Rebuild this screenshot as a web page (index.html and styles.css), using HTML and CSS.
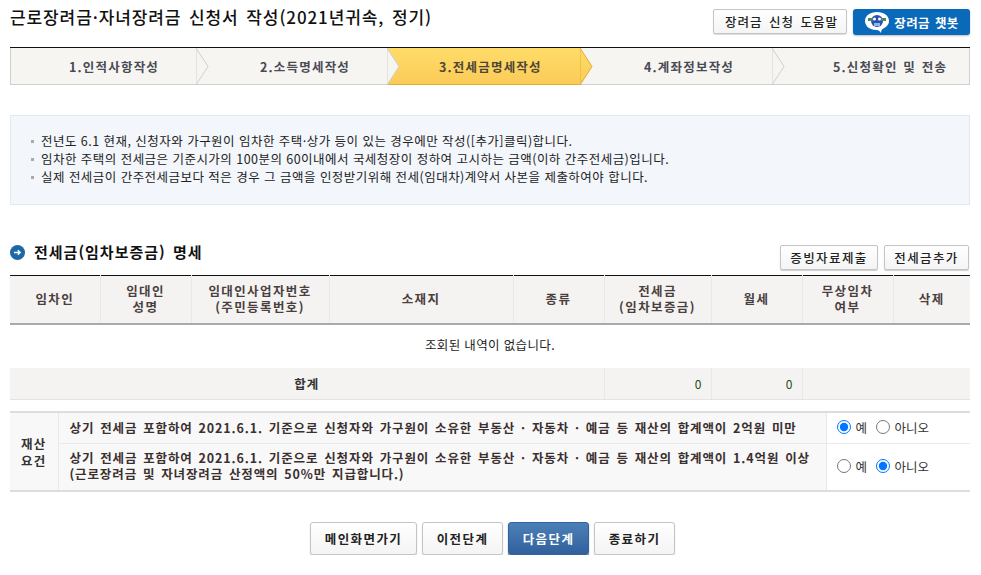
FILE: index.html
```html
<!DOCTYPE html>
<html lang="ko">
<head>
<meta charset="utf-8">
<title>근로장려금·자녀장려금 신청서 작성</title>
<link rel="stylesheet" href="styles.css">
</head>
<body>
<div class="page">
  <header class="top">
    <h1 class="title">근로장려금·자녀장려금 신청서 작성(2021년귀속, 정기)</h1>
    <div class="top-actions">
      <button class="btn btn-help">장려금 신청 도움말</button>
      <button class="btn btn-bot">
        <svg class="bot-icon" width="26" height="24" viewBox="0 0 26 24">
          <path d="M13 2C6 2 1 5.800 1 11s5 9 11 9c2 0 3 .2 5 3 0-2 .5-3.500 2-4.300 3.500-1.500 6-4.200 6-7.700C25 5.800 20 2 13 2z" fill="#fff"/>
          <circle cx="13" cy="11" r="6" fill="#2a4fb5"/>
          <rect x="4" y="8" width="5" height="3" fill="#4a8a5a"/>
          <rect x="17" y="8" width="5" height="3" fill="#4a8a5a"/>
          <circle cx="10.500" cy="9" r="1.500" fill="#fff"/>
          <circle cx="15.500" cy="9" r="1.500" fill="#fff"/>
          <path d="M10 13h6v3h-6z" fill="#8fb4e8"/>
        </svg>
        장려금 챗봇
      </button>
    </div>
  </header>

  <ol class="steps">
    <li class="step step-1"><span>1.인적사항작성</span><svg class="chev" width="13" height="37" viewBox="0 0 13 37"><path d="M0 0 12 18.500 0 37z" fill="#f6f5f2" stroke="#cfcfcf"/></svg></li>
    <li class="step step-2"><span>2.소득명세작성</span><svg class="chev" width="13" height="37" viewBox="0 0 13 37"><path d="M0 0 12 18.500 0 37z" fill="#f6f5f2" stroke="#cfcfcf"/></svg></li>
    <li class="step step-3 is-active"><span>3.전세금명세작성</span><svg class="chev" width="13" height="37" viewBox="0 0 13 37"><defs><linearGradient id="g" x1="0" y1="0" x2="0" y2="1"><stop offset="0" stop-color="#ffdc68"/><stop offset="1" stop-color="#fbcb58"/></linearGradient></defs><path d="M0 0 12 18.500 0 37z" fill="url(#g)" stroke="#e3ae2f"/></svg></li>
    <li class="step step-4"><span>4.계좌정보작성</span><svg class="chev" width="13" height="37" viewBox="0 0 13 37"><path d="M0 0 12 18.500 0 37z" fill="#f6f5f2" stroke="#cfcfcf"/></svg></li>
    <li class="step step-5"><span>5.신청확인 및 전송</span></li>
  </ol>

  <ul class="notice">
    <li>전년도 6.1 현재, 신청자와 가구원이 임차한 주택·상가 등이 있는 경우에만 작성([추가]클릭)합니다.</li>
    <li>임차한 주택의 전세금은 기준시가의 100분의 60이내에서 국세청장이 정하여 고시하는 금액(이하 간주전세금)입니다.</li>
    <li>실제 전세금이 간주전세금보다 적은 경우 그 금액을 인정받기위해 전세(임대차)계약서 사본을 제출하여야 합니다.</li>
  </ul>

  <div class="section-head">
    <h2 class="section-title">
      <svg class="section-icon" width="15" height="15" viewBox="0 0 15 15">
        <circle cx="7.500" cy="7.500" r="7.500" fill="#1f68a8"/>
        <path d="M4 7.500h6M7.800 5.200l2.400 2.300-2.400 2.300" fill="none" stroke="#fff" stroke-width="1.300"/>
      </svg>
      전세금(임차보증금) 명세
    </h2>
    <div class="section-actions">
      <button class="btn btn-small">증빙자료제출</button>
      <button class="btn btn-small">전세금추가</button>
    </div>
  </div>

  <table class="data">
    <colgroup>
      <col class="c1"><col class="c2"><col class="c3"><col class="c4"><col class="c5"><col class="c6"><col class="c7"><col class="c8"><col class="c9">
    </colgroup>
    <thead>
      <tr>
        <th>임차인</th>
        <th>임대인<br>성명</th>
        <th>임대인사업자번호<br>(주민등록번호)</th>
        <th>소재지</th>
        <th>종류</th>
        <th>전세금<br>(임차보증금)</th>
        <th>월세</th>
        <th>무상임차<br>여부</th>
        <th>삭제</th>
      </tr>
    </thead>
    <tbody>
      <tr class="empty"><td colspan="9">조회된 내역이 없습니다.</td></tr>
    </tbody>
    <tfoot>
      <tr>
        <th colspan="5">합계</th>
        <td class="num">0</td>
        <td class="num">0</td>
        <td colspan="2"></td>
      </tr>
    </tfoot>
  </table>

  <table class="assets">
    <colgroup><col class="a1"><col class="a2"><col class="a3"></colgroup>
    <tbody>
      <tr class="r1">
        <th rowspan="2">재산<br>요건</th>
        <td class="desc">상기 전세금 포함하여 2021.6.1. 기준으로 신청자와 가구원이 소유한 부동산 · 자동차 · 예금 등 재산의 합계액이 2억원 미만</td>
        <td class="choice">
          <label><input type="radio" name="a" checked>예</label>
          <label><input type="radio" name="a">아니오</label>
        </td>
      </tr>
      <tr class="r2">
        <td class="desc">상기 전세금 포함하여 2021.6.1. 기준으로 신청자와 가구원이 소유한 부동산 · 자동차 · 예금 등 재산의 합계액이 1.4억원 이상<br>(근로장려금 및 자녀장려금 산정액의 50%만 지급합니다.)</td>
        <td class="choice">
          <label><input type="radio" name="b">예</label>
          <label><input type="radio" name="b" checked>아니오</label>
        </td>
      </tr>
    </tbody>
  </table>

  <div class="actions">
    <button class="btn btn-big w1">메인화면가기</button>
    <button class="btn btn-big w2">이전단계</button>
    <button class="btn btn-big w2 primary">다음단계</button>
    <button class="btn btn-big w2">종료하기</button>
  </div>
</div>
</body>
</html>
```
FILE: styles.css
```css
* { box-sizing: border-box; }
html, body { margin: 0; padding: 0; background: #fff; }
body {
  font-family: "Noto Sans CJK KR", "Liberation Sans", sans-serif;
  font-size: 12.5px;
  color: #222;
}
.page { width: 960px; margin-left: 10px; }

.btn {
  font-family: inherit;
  cursor: pointer;
  background: linear-gradient(#fff, #f4f4f4);
  border: 1px solid #c4c4c4;
  border-radius: 2px;
  color: #222;
  padding: 0;
  font-weight: 500;
}

.top { display: flex; justify-content: space-between; align-items: flex-start; height: 47px; }
.title { margin: 4px 0 0; font-size: 17px; line-height: 26px; font-weight: 500; color: #111; letter-spacing: .9px; word-spacing: 2px; }
.top-actions { display: flex; gap: 6px; padding-top: 9px; }
.btn-help { width: 134px; height: 25px; padding-left: 3px; font-size: 12.5px; letter-spacing: 1px; word-spacing: 2px; box-shadow: 0 1px 1px #ddd; }
.btn-bot {
  width: 117px; height: 26px; display: flex; align-items: center; justify-content: center; gap: 4px;
  background: #0a6ab9; border: 0; border-radius: 3px; color: #fff; font-size: 12.5px; font-weight: 700;
  letter-spacing: .4px; word-spacing: 1px;
  box-shadow: 0 1px 2px #bbb;
}
.bot-icon { display: block; }

.steps {
  list-style: none; margin: 0; padding: 0; display: flex; height: 38px;
  border-top: 1px solid #111;
}
.step {
  position: relative; height: 37px; background: #f6f5f2;
  border-bottom: 1px solid #cfcfcf;
  font-size: 12.5px; font-weight: 700; color: #4a4a55; line-height: 38px; white-space: nowrap;
  letter-spacing: 1.200px; word-spacing: 1px;
}
.step span { position: relative; z-index: 2; }
.chev { position: absolute; top: 0; left: 100%; z-index: 1; display: block; }
.step-1 { width: 186px; padding-left: 58px; border-left: 1px solid #cfcfcf; }
.step-2 { width: 191px; padding-left: 64px; }
.step-3 { width: 193px; padding-left: 52px; }
.step-4 { width: 192px; padding-left: 64px; }
.step-5 { flex: 1; padding-left: 61px; border-right: 1px solid #cfcfcf; }
.is-active {
  background: linear-gradient(#ffdc68, #fbcb58);
  border-bottom-color: #e3ae2f; color: #4d4638;
}

.notice {
  list-style: none; margin: 30px 0 0; padding: 16px 20px 0; height: 90px;
  background: #f3f6fb; border: 1px solid #e3e8f0;
  font-size: 12.5px; line-height: 18px; color: #222; letter-spacing: .46px;
}
.notice li { position: relative; padding-left: 10px; }
.notice li::before {
  content: ""; position: absolute; left: 0; top: 8px; width: 3px; height: 3px; background: #aaa;
}

.section-head { display: flex; justify-content: space-between; align-items: flex-start; margin-top: 35px; height: 35px; }
.section-title {
  margin: 0; display: flex; align-items: center; gap: 9px;
  font-size: 15px; line-height: 24px; font-weight: 700; color: #111; letter-spacing: 1px; word-spacing: 2px;
}
.section-icon { display: block; }
.section-actions { display: flex; gap: 6px; padding-top: 5px; padding-right: 1px; }
.btn-small { height: 25px; font-size: 12.5px; letter-spacing: 1.400px; box-shadow: 0 1px 1px #ccc; }
.btn-small:first-child { width: 98px; }
.btn-small:last-child { width: 85px; }

table { border-collapse: collapse; table-layout: fixed; width: 960px; }
.data { border-top: 1px solid #111; }
.c1 { width: 90px; } .c2 { width: 91px; } .c3 { width: 138px; } .c4 { width: 184px; }
.c5 { width: 91px; } .c6 { width: 107px; } .c7 { width: 91px; } .c8 { width: 91px; } .c9 { width: 77px; }
.data thead th {
  height: 48px; padding: 0; background: #f4f3f1; font-size: 12.5px; line-height: 16px;
  font-weight: 700; color: #4a3f3f; border-left: 1px solid #e8e8e8; border-bottom: 2px solid #aaa;
  letter-spacing: 1.400px;
}
.data thead th:first-child { border-left: 0; }
.empty td { height: 44px; padding: 0 0 4px; text-align: center; font-size: 12.5px; color: #222; letter-spacing: .35px; }
.data tfoot th, .data tfoot td {
  height: 32px; padding: 0; background: #f4f3f1; border-bottom: 1px solid #e3e3e3;
}
.data tfoot th { font-weight: 700; color: #333; font-size: 12.5px; letter-spacing: 1px; }
.data tfoot td { border-left: 1px solid #e8e8e8; }
.data tfoot .num { text-align: right; padding-right: 9px; color: #1f4a1f; font-size: 12px; }

.assets { margin-top: 11px; border-top: 2px solid #ddd; border-bottom: 2px solid #ddd; }
.a1 { width: 48px; } .a3 { width: 144px; }
.assets th {
  background: #f8f8f8; font-size: 12.5px; line-height: 17px; font-weight: 700; color: #333; padding: 0;
  border-right: 1px solid #e8e8e8; letter-spacing: 1.200px;
}
.assets .desc {
  background: #f8f8f8; padding: 0 11px; font-size: 12.5px; line-height: 16px; font-weight: 700; color: #3b3030;
  letter-spacing: .88px; word-spacing: 1.500px; white-space: nowrap;
}
.r1 td { height: 31px; border-bottom: 1px solid #eaeaea; }
.r2 td { height: 48px; }
.r2 .desc { padding-bottom: 2px; }
.choice { padding: 0 0 0 10px; border-left: 1px solid #e8e8e8; font-size: 12.5px; color: #333; white-space: nowrap; }
.choice label { display: inline-flex; align-items: center; margin-right: 5px; }
.choice input { margin: 0 5px 0 0; width: 14px; height: 14px; }

.actions { display: flex; justify-content: center; gap: 5px; margin-top: 30px; padding-left: 5px; }
.btn-big {
  height: 33px; font-size: 12.5px; font-weight: 700; letter-spacing: 1.400px; border-radius: 3px;
  box-shadow: 0 1px 1px #bbb;
}
.w1 { width: 107px; }
.w2 { width: 81px; }
.primary { background: linear-gradient(#4c7fb8, #31619c); border-color: #33639c; color: #fff; box-shadow: 0 1px 1px #1e4670; }
```
